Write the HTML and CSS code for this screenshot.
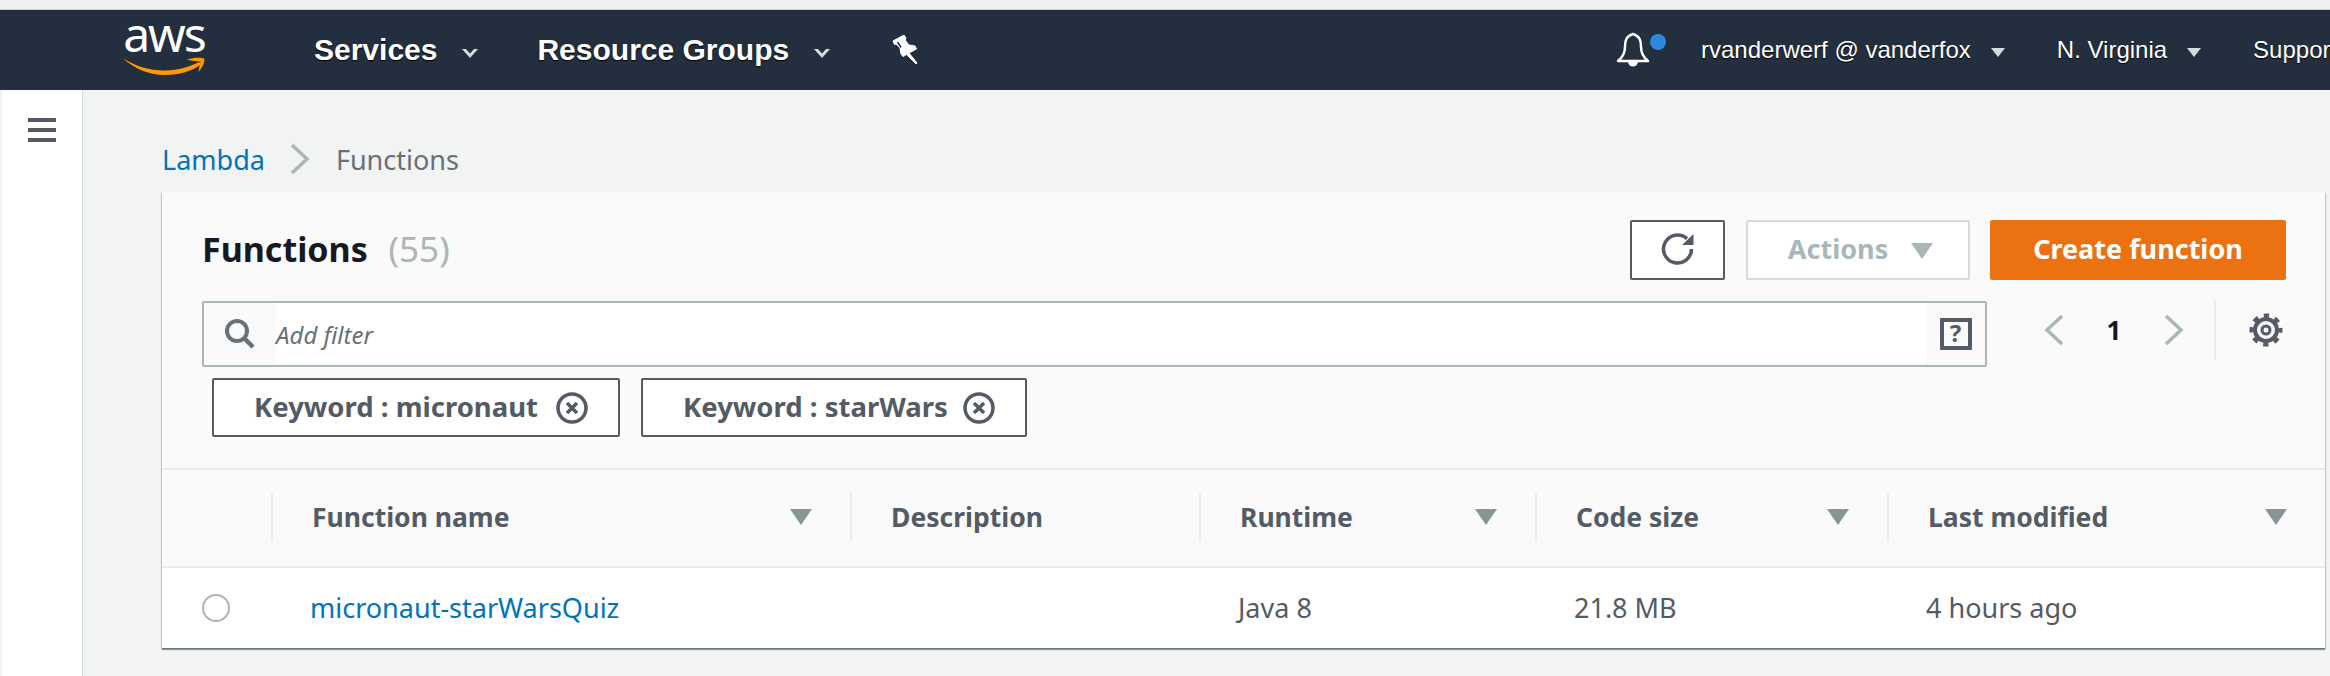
FILE: index.html
```html
<!DOCTYPE html>
<html lang="en">
<head>
    <meta charset="UTF-8">
    <title>Lambda - Functions</title>
    <link rel="stylesheet" href="styles.css">
</head>
<body>
    <div class="browser-strip"></div>
    <!-- top nav -->
    <nav class="nav">
        <div class="logo">
            <span class="logo-text">aws</span>
            <svg class="logo-smile" width="84" height="20" viewBox="0 0 84 20">
                <path d="M1 2C14 11 30 15 44 14.500C56 14 68 11 77 6L79 8.500C70 15 57 19 43 19C28 19 12 13 1 2Z" fill="#f90"/>
                <path d="M65 3.500C71 1.500 79 1 82 2.500C83.500 4.500 81 11 76.500 16C77 12 78 8 78.500 5.500C75 5 70 5 65 3.500Z" fill="#f90"/>
            </svg>
        </div>
        <a class="nav-main services">Services</a>
        <svg class="chev" width="18" height="11" viewBox="0 0 18 11"><path d="M1 1L9 10L17 1L13 1L9 5.500L5 1Z" fill="#d5dbdb"/></svg>
        <a class="nav-main groups">Resource Groups</a>
        <svg class="chev" width="18" height="11" viewBox="0 0 18 11"><path d="M1 1L9 10L17 1L13 1L9 5.500L5 1Z" fill="#d5dbdb"/></svg>
        <svg class="pin" width="28" height="30" viewBox="0 0 28 30">
            <path d="M2 6L13 0L15 3L14 5L18 10L24 11L25.500 14L18 18L26 28L25 29L15.500 19.500L12 21.500L10 19L9 13L5 9L3.500 9.500Z" fill="#fff" stroke="#fff" stroke-width="1" stroke-linejoin="round"/>
            <path d="M6.500 7L10 12.500" stroke="#232f3e" stroke-width="1.500"/>
        </svg>
        <div class="nav-right">
            <svg class="bell" width="34" height="36" viewBox="0 0 34 36">
                <path d="M17 2C10 4 9 9 9 15C9 21 7 25 2 29L32 29C27 25 25 21 25 15C25 9 24 4 17 2Z" fill="none" stroke="#fff" stroke-width="2.500" stroke-linejoin="round"/>
                <path d="M12 30C13 36 21 36 22 30Z" fill="#fff"/>
            </svg>
            <span class="bell-dot"></span>
            <a class="nav-item user">rvanderwerf @ vanderfox</a>
            <span class="caret"></span>
            <a class="nav-item region">N. Virginia</a>
            <span class="caret"></span>
            <a class="nav-item support">Support</a>
        </div>
    </nav>

    <div class="page">
        <aside class="sidebar">
            <div class="burger"><span></span><span></span><span></span></div>
        </aside>
        <main class="main">
            <div class="crumbs">
                <a class="link">Lambda</a>
                <svg class="crumb-sep" width="20" height="32" viewBox="0 0 20 32"><path d="M2 2L17 16L2 30" fill="none" stroke="#aab7b8" stroke-width="3.500"/></svg>
                <span class="crumb-cur">Functions</span>
            </div>

            <section class="panel">
                <div class="panel-head">
                    <div class="title-row">
                        <h1 class="title">Functions <span class="count">(55)</span></h1>
                        <button class="btn btn-refresh">
                            <svg width="36" height="36" viewBox="0 0 36 36">
                                <path d="M27 7.700A14 14 0 1 0 31.500 18" fill="none" stroke="#545b64" stroke-width="3.500"/>
                                <path d="M33.500 3L33.500 14L22 14Z" fill="#545b64"/>
                            </svg>
                        </button>
                        <button class="btn btn-actions">Actions <i class="tri tri-light"></i></button>
                        <button class="btn btn-create">Create function</button>
                    </div>
                    <div class="filter-row">
                        <div class="filter">
                            <span class="filter-icon">
                                <svg width="32" height="30" viewBox="0 0 32 30">
                                    <circle cx="13" cy="12" r="10" fill="none" stroke="#687078" stroke-width="4"/>
                                    <path d="M20 19L29 28" stroke="#687078" stroke-width="4.500"/>
                                </svg>
                            </span>
                            <span class="filter-input">Add filter</span>
                            <span class="filter-help"><b class="help-box">?</b></span>
                        </div>
                        <div class="pager">
                            <svg width="20" height="32" viewBox="0 0 20 32"><path d="M18 2L3 16L18 30" fill="none" stroke="#aab7b8" stroke-width="3.500"/></svg>
                            <span class="page-num">1</span>
                            <svg width="20" height="32" viewBox="0 0 20 32"><path d="M2 2L17 16L2 30" fill="none" stroke="#aab7b8" stroke-width="3.500"/></svg>
                        </div>
                        <div class="settings">
                            <svg width="34" height="34" viewBox="0 0 34 34">
                                <circle cx="17" cy="17" r="11" fill="none" stroke="#545b64" stroke-width="4"/>
                                <circle cx="17" cy="17" r="14.500" fill="none" stroke="#545b64" stroke-width="4" stroke-dasharray="5.390 6" stroke-dashoffset="2.700"/>
                                <circle cx="17" cy="17" r="4" fill="none" stroke="#545b64" stroke-width="3"/>
                            </svg>
                        </div>
                    </div>
                    <div class="tokens">
                        <div class="token token-a"><span>Keyword : micronaut</span>
                            <svg class="x" width="32" height="32" viewBox="0 0 32 32"><circle cx="16" cy="16" r="14" fill="none" stroke="#545b64" stroke-width="3.500"/><path d="M11 11L21 21M21 11L11 21" stroke="#545b64" stroke-width="3.500"/></svg>
                        </div>
                        <div class="token token-b"><span>Keyword : starWars</span>
                            <svg class="x" width="32" height="32" viewBox="0 0 32 32"><circle cx="16" cy="16" r="14" fill="none" stroke="#545b64" stroke-width="3.500"/><path d="M11 11L21 21M21 11L11 21" stroke="#545b64" stroke-width="3.500"/></svg>
                        </div>
                    </div>
                </div>

                <div class="grid grid-head">
                    <div class="th th-first"></div>
                    <div class="th"><span>Function name</span><i class="tri"></i></div>
                    <div class="th"><span>Description</span></div>
                    <div class="th"><span>Runtime</span><i class="tri"></i></div>
                    <div class="th"><span>Code size</span><i class="tri"></i></div>
                    <div class="th"><span>Last modified</span><i class="tri"></i></div>
                </div>
                <div class="grid grid-row">
                    <div class="td-radio"><span class="radio"></span></div>
                    <div class="td"><a class="link">micronaut-starWarsQuiz</a></div>
                    <div class="td"></div>
                    <div class="td">Java 8</div>
                    <div class="td">21.8 MB</div>
                    <div class="td">4 hours ago</div>
                </div>
            </section>
        </main>
    </div>
</body>
</html>
```

FILE: styles.css
```css
* {
    box-sizing: border-box;
}
html, body {
    margin: 0;
    height: 100%;
    overflow: hidden;
}
body {
    background-color: #f2f3f3;
    font-family: "Noto Sans", sans-serif;
    color: #545b64;
}
.browser-strip {
    height: 10px;
    background-color: #f0f0f0;
    border-bottom: 1px solid #d0d0d0;
}

/* nav */
.nav {
    display: flex;
    align-items: center;
    height: 80px;
    background-color: #232f3e;
    color: #fff;
    font-family: "Liberation Sans", sans-serif;
    white-space: nowrap;
}
.logo {
    display: flex;
    flex-direction: column;
    width: 84px;
    margin-left: 122px;
    margin-bottom: 8px;
}
.logo-text {
    display: block;
    height: 35px;
    font-family: "Noto Sans", sans-serif;
    font-size: 48px;
    line-height: 35px;
    text-align: center;
    letter-spacing: -2px;
}
.logo-smile {
    margin-top: 5px;
}
.nav-main {
    font-size: 30px;
    font-weight: bold;
    color: #fff;
    text-shadow: 0 1px 1px #000;
}
.services {
    margin-left: 108px;
}
.groups {
    margin-left: 58px;
}
.chev {
    margin-left: 24px;
    margin-top: 6px;
}
.pin {
    margin-left: 60px;
}
.nav-right {
    display: flex;
    align-items: center;
    margin-left: auto;
    width: 714px;
    flex: none;
}
.nav-right > * {
    flex: none;
}
.bell-dot {
    width: 16px;
    height: 16px;
    border-radius: 50%;
    background-color: #2e86de;
    margin-top: -16px;
}
.nav-item {
    font-size: 24px;
    color: #fff;
    text-shadow: 0 1px 1px #000;
}
.user {
    margin-left: 35px;
}
.region {
    margin-left: 52px;
}
.support {
    margin-left: 52px;
}
.caret {
    width: 0;
    height: 0;
    margin-left: 20px;
    margin-top: 4px;
    border-left: 7px solid transparent;
    border-right: 7px solid transparent;
    border-top: 9px solid #d5dbdb;
}

/* page */
.page {
    display: flex;
    height: 586px;
}
.sidebar {
    width: 81px;
    flex: none;
    margin-left: 2px;
    background-color: #fff;
    border-right: 1px solid #d5dbdb;
    padding: 28px 0 0 26px;
}
.burger {
    display: flex;
    flex-direction: column;
    gap: 6px;
    width: 28px;
}
.burger span {
    height: 4px;
    background-color: #545b64;
}
.main {
    flex: 1;
    min-width: 0;
    padding: 0 5px 0 79px;
}
.crumbs {
    display: flex;
    align-items: center;
    height: 102px;
    padding: 36px 0 0 0;
    font-size: 27px;
}
.link {
    color: #0073bb;
}
.crumb-sep {
    margin: 0 26px 0 25px;
}
.crumb-cur {
    color: #687078;
}

/* panel */
.panel {
    background-color: #fff;
    box-shadow: 0 2px 1px 0 rgba(0, 28, 36, 0.4), 1px 1px 1px 0 rgba(0, 28, 36, 0.15), -1px 1px 1px 0 rgba(0, 28, 36, 0.15);
}
.panel-head {
    height: 278px;
    background-color: #fafafa;
    border-bottom: 2px solid #eaeded;
    padding: 28px 39px 0 40px;
}
.title-row {
    display: flex;
    align-items: center;
    height: 60px;
}
.title {
    margin: 0 auto 0 0;
    padding-bottom: 3px;
    font-size: 34px;
    font-weight: bold;
    color: #16191f;
}
.count {
    margin-left: 12px;
    font-size: 35px;
    font-weight: normal;
    color: #aab7b8;
}
.btn {
    height: 60px;
    border-radius: 2px;
    font-family: inherit;
    font-size: 27px;
    font-weight: bold;
    padding: 0 0 3px 0;
}
.btn-refresh {
    display: flex;
    align-items: center;
    justify-content: center;
    width: 95px;
    background-color: #fff;
    border: 2px solid #545b64;
}
.btn-actions {
    width: 224px;
    margin-left: 21px;
    padding-left: 5px;
    background-color: #fff;
    border: 2px solid #d5dbdb;
    color: #aab7b8;
}
.btn-create {
    width: 296px;
    margin-left: 20px;
    background-color: #ec7211;
    border: none;
    color: #fff;
}
.tri {
    display: inline-block;
    width: 0;
    height: 0;
    border-left: 11px solid transparent;
    border-right: 11px solid transparent;
    border-top: 16px solid #879596;
}
.tri-light {
    margin-left: 16px;
    border-top-color: #aab7b8;
}
.filter-row {
    display: flex;
    align-items: center;
    height: 66px;
    margin-top: 21px;
}
.filter {
    display: flex;
    align-items: stretch;
    width: 1785px;
    height: 66px;
    flex: none;
    background-color: #fff;
    border: 2px solid #aab7b8;
    border-radius: 2px;
}
.filter-icon {
    display: flex;
    align-items: center;
    justify-content: center;
    width: 72px;
    background-color: #fafafa;
}
.filter-input {
    flex: 1;
    align-self: center;
    font-style: italic;
    font-size: 24px;
    color: #687078;
}
.filter-help {
    display: flex;
    align-items: center;
    justify-content: center;
    width: 59px;
    background-color: #fafafa;
}
.help-box {
    display: block;
    width: 32px;
    height: 32px;
    border: 4px solid #545b64;
    border-radius: 1px;
    font-size: 24px;
    line-height: 22px;
    text-align: center;
    color: #545b64;
}
.pager {
    display: flex;
    align-items: center;
    margin-left: 57px;
    width: 140px;
    justify-content: space-between;
    margin-top: -9px;
}
.page-num {
    font-weight: bold;
    font-size: 26px;
    color: #16191f;
}
.settings {
    display: flex;
    align-items: center;
    height: 60px;
    margin-left: 30px;
    padding-left: 33px;
    border-left: 2px solid #eaeded;
    margin-top: -9px;
}
.tokens {
    display: flex;
    gap: 21px;
    margin-top: 11px;
    padding-left: 10px;
}
.token {
    display: flex;
    align-items: center;
    justify-content: space-between;
    height: 59px;
    padding: 0 30px 0 40px;
    background-color: #fff;
    border: 2px solid #545b64;
    border-radius: 2px;
    font-size: 27.500px;
    font-weight: bold;
}
.token span {
    padding-bottom: 2px;
}
.token-a {
    width: 408px;
}
.token-b {
    width: 386px;
}

/* table */
.grid {
    display: grid;
    grid-template-columns: 109px 579px 349px 336px 352px 1fr;
}
.grid-head {
    height: 98px;
    background-color: #fafafa;
    border-bottom: 2px solid #eaeded;
    align-items: center;
}
.th {
    display: flex;
    align-items: center;
    justify-content: space-between;
    height: 49px;
    padding: 0 38px 0 39px;
    border-left: 2px solid #eaeded;
    font-size: 26.500px;
    font-weight: bold;
    margin-top: -2px;
}
.th-first {
    border-left: none;
}
.grid-row {
    height: 80px;
    align-items: center;
    font-size: 27px;
}
.td {
    padding: 0 0 2px 39px;
}
.td-radio {
    padding-left: 40px;
    display: flex;
}
.radio {
    width: 28px;
    height: 28px;
    border: 2px solid #aab7b8;
    border-radius: 50%;
}
```
